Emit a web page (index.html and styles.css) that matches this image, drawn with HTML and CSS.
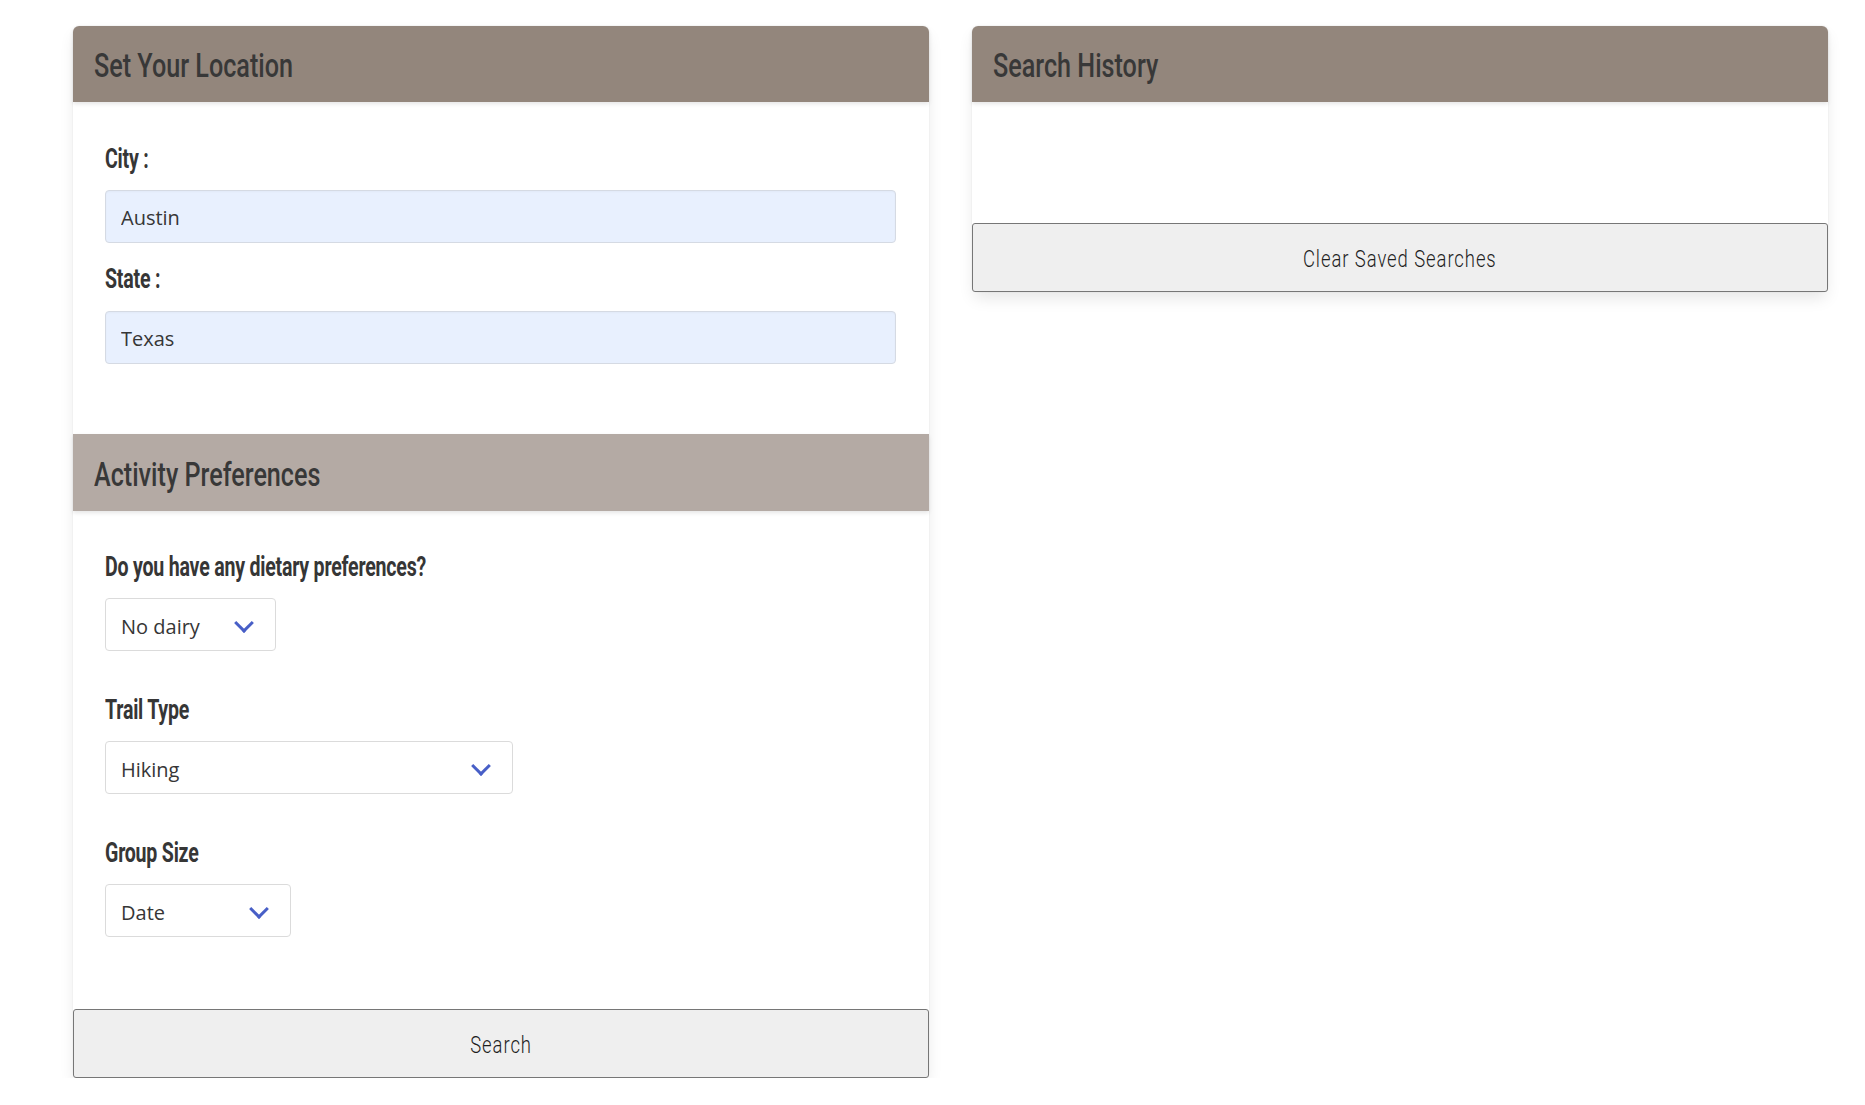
FILE: index.html
```html
<!DOCTYPE html>
<html lang="en">
<head>
<meta charset="utf-8">
<title>Trail Planner</title>
<link rel="stylesheet" href="styles.css">
</head>
<body>
<div class="page">
  <section class="card">
    <header class="card-head"><h2 class="card-title"><span class="cond">Set Your Location</span></h2></header>
    <div class="card-body body-location">
      <div class="field">
        <label class="label" for="city"><span class="cond">City :</span></label>
        <input class="input" id="city" type="text" value="Austin">
      </div>
      <div class="field field-next">
        <label class="label" for="state"><span class="cond">State :</span></label>
        <input class="input" id="state" type="text" value="Texas">
      </div>
    </div>
    <header class="card-head card-head-light"><h2 class="card-title"><span class="cond">Activity Preferences</span></h2></header>
    <div class="card-body body-prefs">
      <div class="field">
        <label class="label" for="diet"><span class="cond">Do you have any dietary preferences?</span></label>
        <div class="select select-diet">
          <select id="diet"><option>No dairy</option><option>Vegetarian</option></select>
        </div>
      </div>
      <div class="field field-gap">
        <label class="label" for="trail"><span class="cond">Trail Type</span></label>
        <div class="select select-trail">
          <select id="trail"><option>Hiking</option><option>Mountain Biking</option></select>
        </div>
      </div>
      <div class="field field-gap">
        <label class="label" for="group"><span class="cond">Group Size</span></label>
        <div class="select select-group">
          <select id="group"><option>Date</option><option>Family</option></select>
        </div>
      </div>
    </div>
    <button class="card-btn" type="button"><span class="cond cond-center">Search</span></button>
  </section>

  <section class="card">
    <header class="card-head"><h2 class="card-title"><span class="cond">Search History</span></h2></header>
    <div class="history-body"></div>
    <button class="card-btn" type="button"><span class="cond cond-center">Clear Saved Searches</span></button>
  </section>
</div>
</body>
</html>
```

FILE: styles.css
```css
* { box-sizing: border-box; }

html, body {
  margin: 0;
  padding: 0;
  background: #ffffff;
}

body {
  font-family: "Open Sans", "Noto Sans", "Liberation Sans", sans-serif;
  color: #363636;
}

.page {
  display: flex;
  align-items: flex-start;
  gap: 43px;
  padding: 26px 0 0 73px;
}

.card {
  width: 856px;
  background: #ffffff;
  border-radius: 6px;
  box-shadow: 0 8px 16px -2px rgba(10, 10, 10, 0.1), 0 0 0 1px rgba(10, 10, 10, 0.02);
  display: flex;
  flex-direction: column;
}

/* condensed display face (narrowed Roboto stands in for a condensed family) */
.cond {
  display: inline-block;
  white-space: nowrap;
  transform: scaleX(0.74);
  transform-origin: 0 50%;
}

.cond-center {
  transform-origin: 50% 50%;
}

.card-head {
  height: 76px;
  display: flex;
  align-items: center;
  padding: 2px 21px 0;
  background: #93867c;
  border-radius: 6px 6px 0 0;
  box-shadow: 0 2px 4px rgba(10, 10, 10, 0.1);
  position: relative;
  z-index: 1;
}

.card-head-light {
  height: 77px;
  background: #b4aaa4;
  border-radius: 0;
}

.card-title {
  margin: 0;
  font-family: Roboto, "Liberation Sans", sans-serif;
  font-weight: 500;
  font-size: 34px;
  line-height: 40px;
  color: #383838;
}

.card-body {
  padding: 0 33px 0 32px;
}

.body-location {
  padding-top: 39px;
  padding-bottom: 70px;
}

.body-prefs {
  padding-top: 38px;
  padding-bottom: 72px;
}

.field {
  display: flex;
  flex-direction: column;
  align-items: flex-start;
}

.field-next { margin-top: 18px; }
.field-gap { margin-top: 41px; }

.label {
  display: block;
  height: 36px;
  margin-bottom: 13px;
  font-family: Roboto, "Liberation Sans", sans-serif;
  font-weight: 700;
  font-size: 27px;
  line-height: 37px;
  color: #363636;
  letter-spacing: -0.3px;
}

.label .cond {
  transform: scaleX(0.725);
}

.field-next .label { margin-bottom: 14px; }

.input {
  width: 100%;
  height: 53px;
  margin: 0;
  padding: 2px 15px 0;
  font-family: "Open Sans", "Noto Sans", "Liberation Sans", sans-serif;
  font-size: 20px;
  color: #363636;
  background: #e8f0fe;
  border: 1px solid #d5dae3;
  border-radius: 4px;
  box-shadow: inset 0 1px 2px rgba(10, 10, 10, 0.03);
  outline: none;
}

.select {
  position: relative;
  height: 53px;
}

.select select {
  appearance: none;
  -webkit-appearance: none;
  width: 100%;
  height: 100%;
  margin: 0;
  padding: 3px 50px 0 15px;
  font-family: "Open Sans", "Noto Sans", "Liberation Sans", sans-serif;
  font-size: 20px;
  color: #363636;
  background: #ffffff;
  border: 1px solid #dbdbdb;
  border-radius: 4px;
  outline: none;
}

.select::after {
  content: "";
  position: absolute;
  top: 50%;
  right: 25px;
  width: 11px;
  height: 11px;
  margin-top: -9px;
  border: 3.5px solid #485fc7;
  border-top: 0;
  border-right: 0;
  transform: rotate(-45deg);
  pointer-events: none;
}

.select-diet { width: 171px; }
.select-trail { width: 408px; }
.select-group { width: 186px; }

.history-body {
  height: 121px;
}

.card-btn {
  display: flex;
  align-items: center;
  justify-content: center;
  width: 100%;
  height: 69px;
  margin: 0;
  padding: 3px 0 0;
  background: #efefef;
  border: 1px solid #767676;
  border-radius: 3px;
  font-family: Roboto, "Liberation Sans", sans-serif;
  font-weight: 300;
  font-size: 24px;
  letter-spacing: 1.2px;
  color: #1e1e1e;
  cursor: pointer;
}

.card-btn .cond {
  transform: scaleX(0.77);
}
```
